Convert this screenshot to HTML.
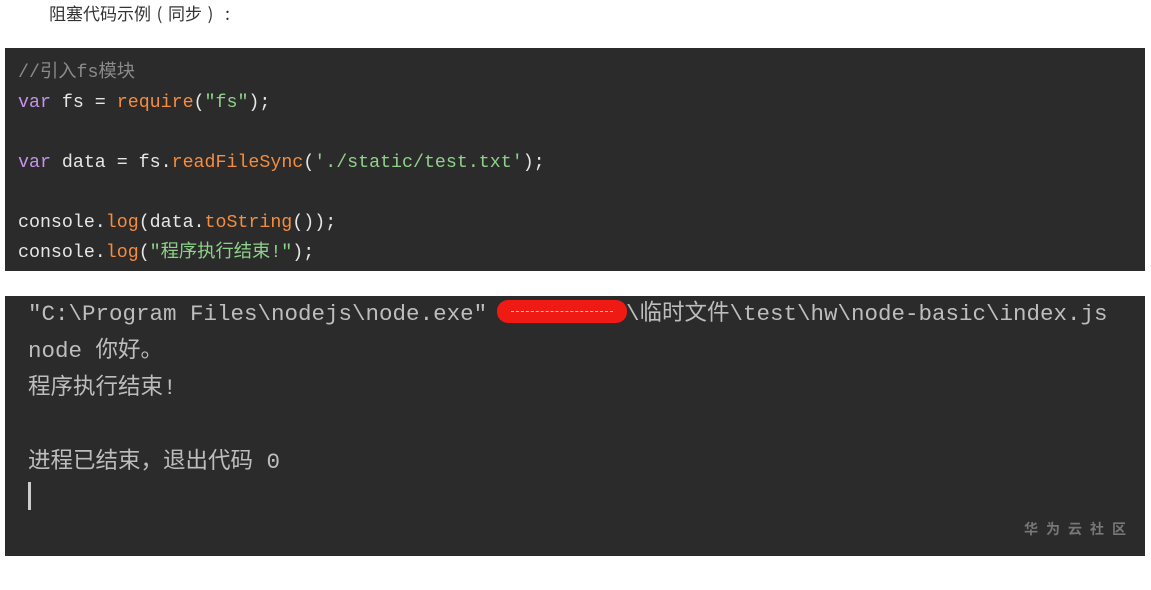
<!DOCTYPE html>
<html><head><meta charset="utf-8"><style>
body{margin:0;width:1151px;height:590px;background:#fff;position:relative;overflow:hidden;font-family:"Liberation Sans","Noto Sans CJK SC",sans-serif}
.t{position:absolute;white-space:pre}
.code{position:absolute;left:5px;top:48px;width:1140px;height:223px;background:#2b2b2b}
.code .t{font-family:"Liberation Mono","Noto Sans CJK SC",monospace;font-size:18.3px;color:#e6e6e6;left:13px;line-height:30px}
.k{color:#c792ea}.f{color:#f78c3c}.s{color:#8fd18b}.code .c{color:#8a8a8a}
.term{position:absolute;left:5px;top:296px;width:1140px;height:260px;background:#2b2b2b}
.term .t{font-family:"Liberation Mono","Noto Sans CJK SC",monospace;font-size:22.5px;color:#bdbdbd;left:23px;line-height:37px}
.p{display:inline-block;width:17px;text-align:center}
</style></head><body>
<div class="t" style="left:49px;top:1px;font-size:17px;color:#333;line-height:24px;font-family:'Noto Sans CJK SC',sans-serif">阻塞代码示例<span class="p">(</span>同步<span class="p">)</span><span class="p">:</span></div>
<div class="code">
<div class="t c" style="top:10px">//引入fs模块</div>
<div class="t" style="top:40px"><span class="k">var</span> fs = <span class="f">require</span>(<span class="s">"fs"</span>);</div>
<div class="t" style="top:100px"><span class="k">var</span> data = fs.<span class="f">readFileSync</span>(<span class="s">'./static/test.txt'</span>);</div>
<div class="t" style="top:160px">console.<span class="f">log</span>(data.<span class="f">toString</span>());</div>
<div class="t" style="top:190px">console.<span class="f">log</span>(<span class="s">"程序执行结束!"</span>);</div>
</div>
<div class="term">
<div class="t" style="top:0px">"C:\Program Files\nodejs\node.exe"</div>
<div style="position:absolute;left:492px;top:4px;width:130px;height:23px;background:#f01a14;border-radius:11px"><div style="position:absolute;left:14px;right:14px;top:11px;border-top:1px dashed #f8c0c0"></div></div>
<div class="t" style="top:0px;left:621px">\临时文件\test\hw\node-basic\index.js</div>
<div class="t" style="top:37px">node 你好。</div>
<div class="t" style="top:74px">程序执行结束!</div>
<div class="t" style="top:148px">进程已结束，退出代码 0</div>
<div style="position:absolute;left:23px;top:186px;width:3px;height:28px;background:#ccc"></div>
<div class="t" style="left:1019px;top:223px;font-size:14px;color:#777;letter-spacing:8px;font-family:'Noto Sans CJK SC',sans-serif;font-weight:bold;line-height:20px">华为云社区</div>
</div>
</body></html>
